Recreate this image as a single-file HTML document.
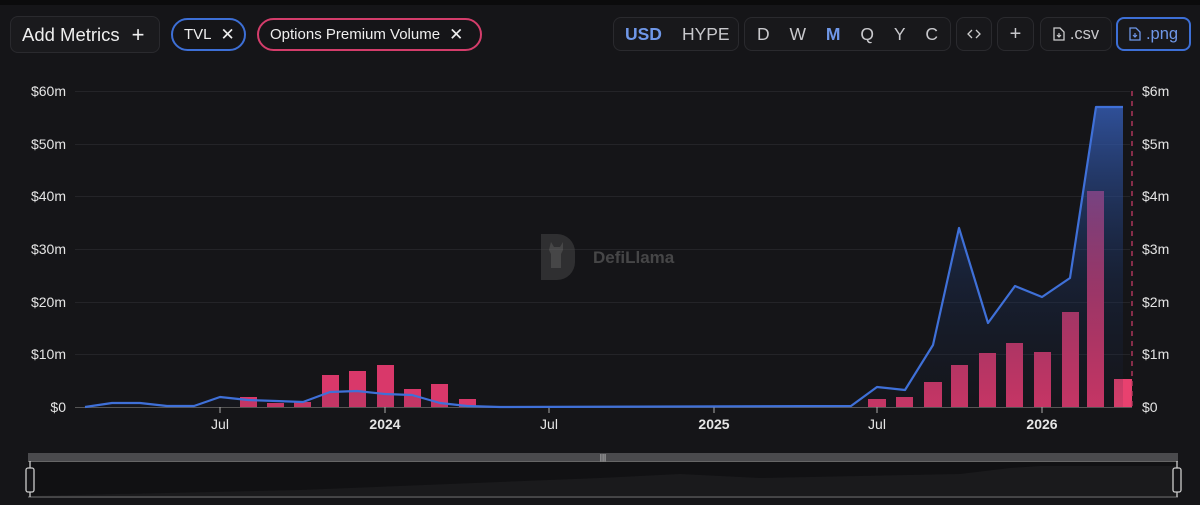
<!DOCTYPE html><html><head><style>
body{margin:0;width:1200px;height:505px;background:#151518;font-family:"Liberation Sans",sans-serif;overflow:hidden;position:relative;color:#e5e5e5}
.top{position:absolute;left:0;top:0;width:1200px;height:5px;background:#0b0b0c}
.b{position:absolute;top:17px;height:34px;border:1px solid #2a2a2e;border-radius:8px;background:#18181b;display:flex;align-items:center;font-size:16px;color:#c8c8cc;box-sizing:border-box;white-space:nowrap}
.pill{position:absolute;top:18px;height:33px;border-radius:17px;border:2px solid;display:flex;align-items:center;font-size:15px;color:#eee;box-sizing:border-box;padding:0 11px;white-space:nowrap}
</style></head><body><div class="top"></div>
<div class="b" style="left:10px;width:150px;height:37px;top:16px;padding-left:11px;font-size:18.5px;color:#eee;background:#1a1a1d">Add Metrics<span style="margin-left:12px;font-size:22px;font-weight:300">+</span></div>
<div class="pill" style="left:171px;width:75px;border-color:#3d6fd6">TVL<span style="margin-left:9px;font-size:17px">✕</span></div>
<div class="pill" style="left:257px;width:225px;border-color:#d43d6b">Options Premium Volume<span style="margin-left:9px;font-size:17px">✕</span></div>
<div class="b" style="left:613px;width:126px;font-size:17.5px"><span style="margin-left:11px;color:#6f97e8;font-weight:bold">USD</span><span style="margin-left:20px">HYPE</span></div>
<div class="b" style="left:744px;width:207px;font-size:17.5px;justify-content:space-around;padding:0 2px"><span>D</span><span>W</span><span style="color:#6f97e8;font-weight:bold">M</span><span>Q</span><span>Y</span><span>C</span></div>
<div class="b" style="left:956px;width:36px;justify-content:center"><svg width="14" height="10" viewBox="0 0 14 10"><path d="M5 1L1 5l4 4M9 1l4 4-4 4" fill="none" stroke="#ccc" stroke-width="1.3"/></svg></div>
<div class="b" style="left:997px;width:37px;justify-content:center;font-size:20px">+</div>
<div class="b" style="left:1040px;width:72px;justify-content:center;font-size:16.5px"><svg width="12" height="14" viewBox="0 0 12 14" style="margin-right:5px"><path d="M1 1h6l4 4v8H1z" fill="none" stroke="#ccc" stroke-width="1.3"/><path d="M6 6v4M4 8l2 2 2-2" fill="none" stroke="#ccc" stroke-width="1.2"/></svg>.csv</div>
<div class="b" style="left:1116px;width:75px;justify-content:center;font-size:16.5px;border:2px solid #3d6fd6;color:#6f97e8"><svg width="12" height="14" viewBox="0 0 12 14" style="margin-right:5px"><path d="M1 1h6l4 4v8H1z" fill="none" stroke="#6f97e8" stroke-width="1.3"/><path d="M6 6v4M4 8l2 2 2-2" fill="none" stroke="#6f97e8" stroke-width="1.2"/></svg>.png</div>
<svg width="1200" height="505" style="position:absolute;left:0;top:0" font-family="Liberation Sans" font-size="14">
<defs><linearGradient id="ag" x1="0" y1="91" x2="0" y2="407" gradientUnits="userSpaceOnUse"><stop offset="0" stop-color="#3a66c8" stop-opacity=".8"/><stop offset=".6" stop-color="#1d3567" stop-opacity=".35"/><stop offset="1" stop-color="#15203a" stop-opacity=".1"/></linearGradient></defs>
<g stroke="#242428" stroke-width="1"><line x1="75" y1="91.5" x2="1130" y2="91.5"/><line x1="75" y1="144.5" x2="1130" y2="144.5"/><line x1="75" y1="196.5" x2="1130" y2="196.5"/><line x1="75" y1="249.5" x2="1130" y2="249.5"/><line x1="75" y1="302.5" x2="1130" y2="302.5"/><line x1="75" y1="354.5" x2="1130" y2="354.5"/></g>
<line x1="75" y1="407.5" x2="1132" y2="407.5" stroke="#555"/>
<g fill="#e5e5e5" text-anchor="end"><text x="66" y="96">$60m</text><text x="66" y="149">$50m</text><text x="66" y="201">$40m</text><text x="66" y="254">$30m</text><text x="66" y="307">$20m</text><text x="66" y="359">$10m</text><text x="66" y="412">$0</text></g>
<g fill="#e5e5e5"><text x="1142" y="96">$6m</text><text x="1142" y="149">$5m</text><text x="1142" y="201">$4m</text><text x="1142" y="254">$3m</text><text x="1142" y="307">$2m</text><text x="1142" y="359">$1m</text><text x="1142" y="412">$0</text></g>
<g fill="#e5e5e5" text-anchor="middle"><text x="220" y="429">Jul</text><text x="385" y="429" font-weight="bold">2024</text><text x="549" y="429">Jul</text><text x="714" y="429" font-weight="bold">2025</text><text x="877" y="429">Jul</text><text x="1042" y="429" font-weight="bold">2026</text></g>
<g stroke="#aaa"><line x1="220" y1="407" x2="220" y2="413"/><line x1="385" y1="407" x2="385" y2="413"/><line x1="549" y1="407" x2="549" y2="413"/><line x1="714" y1="407" x2="714" y2="413"/><line x1="877" y1="407" x2="877" y2="413"/><line x1="1042" y1="407" x2="1042" y2="413"/></g>
<g fill="#d9386a"><rect x="240" y="397" width="17" height="10"/><rect x="267" y="403" width="17" height="4"/><rect x="294" y="402" width="17" height="5"/><rect x="322" y="375" width="17" height="32"/><rect x="349" y="371" width="17" height="36"/><rect x="377" y="365" width="17" height="42"/><rect x="404" y="389" width="17" height="18"/><rect x="431" y="384" width="17" height="23"/><rect x="459" y="399" width="17" height="8"/>
<rect x="868" y="399" width="18" height="8"/><rect x="896" y="397" width="17" height="10"/><rect x="924" y="382" width="18" height="25"/><rect x="951" y="365" width="17" height="42"/><rect x="979" y="353" width="17" height="54"/><rect x="1006" y="343" width="17" height="64"/><rect x="1034" y="352" width="17" height="55"/><rect x="1062" y="312" width="17" height="95"/><rect x="1087" y="191" width="17" height="216"/><rect x="1114" y="379" width="18" height="28" fill="#e8416f"/></g>
<path d="M85 407L112 403L140 403L167 406L194 406L220 397L248 400L276 401L303 402L330 392L357 391L385 394L412 395L440 403L467 406L500 407L851 406L877 387L905 390L933 345L959 228L988 323L1015 286L1042 297L1070 278L1096 107L1123 107L1123 407L85 407Z" fill="url(#ag)"/>
<path d="M85 407L112 403L140 403L167 406L194 406L220 397L248 400L276 401L303 402L330 392L357 391L385 394L412 395L440 403L467 406L500 407L851 406L877 387L905 390L933 345L959 228L988 323L1015 286L1042 297L1070 278L1096 107L1123 107" fill="none" stroke="#3f70d8" stroke-width="2.2" stroke-linejoin="round"/>
<line x1="1132" y1="91" x2="1132" y2="407" stroke="#c23a62" stroke-width="1.3" stroke-dasharray="5,5"/>
<g opacity=".5"><path d="M541 234h16a18 18 0 0 1 18 18v10a18 18 0 0 1-18 18h-16z" fill="#4a4a4a"/><path d="M551 242l3 5h6l3-5v8l-2 4v14h-10v-14l-2-4z" fill="#777"/><text x="593" y="263" font-size="17" font-weight="bold" fill="#777">DefiLlama</text></g>
<rect x="28" y="453" width="1150" height="8" fill="#4a4a4d"/>
<rect x="28" y="461" width="1150" height="36" fill="#111113"/>
<path d="M28 496L300 490L600 478L680 474L760 478L960 474L1010 468L1040 466L1178 466L1178 496Z" fill="#1a1a1c"/>
<line x1="28" y1="497" x2="1178" y2="497" stroke="#777"/>
<line x1="28" y1="461.5" x2="1178" y2="461.5" stroke="#666"/>
<text x="603" y="460" font-size="8" fill="#ddd" text-anchor="middle">|||</text>
<g fill="#151518" stroke="#ccc" stroke-width="1.3"><line x1="30" y1="461" x2="30" y2="497"/><rect x="26" y="468" width="8" height="24" rx="2"/><line x1="1177" y1="461" x2="1177" y2="497"/><rect x="1173" y="468" width="8" height="24" rx="2"/></g>
</svg></body></html>
